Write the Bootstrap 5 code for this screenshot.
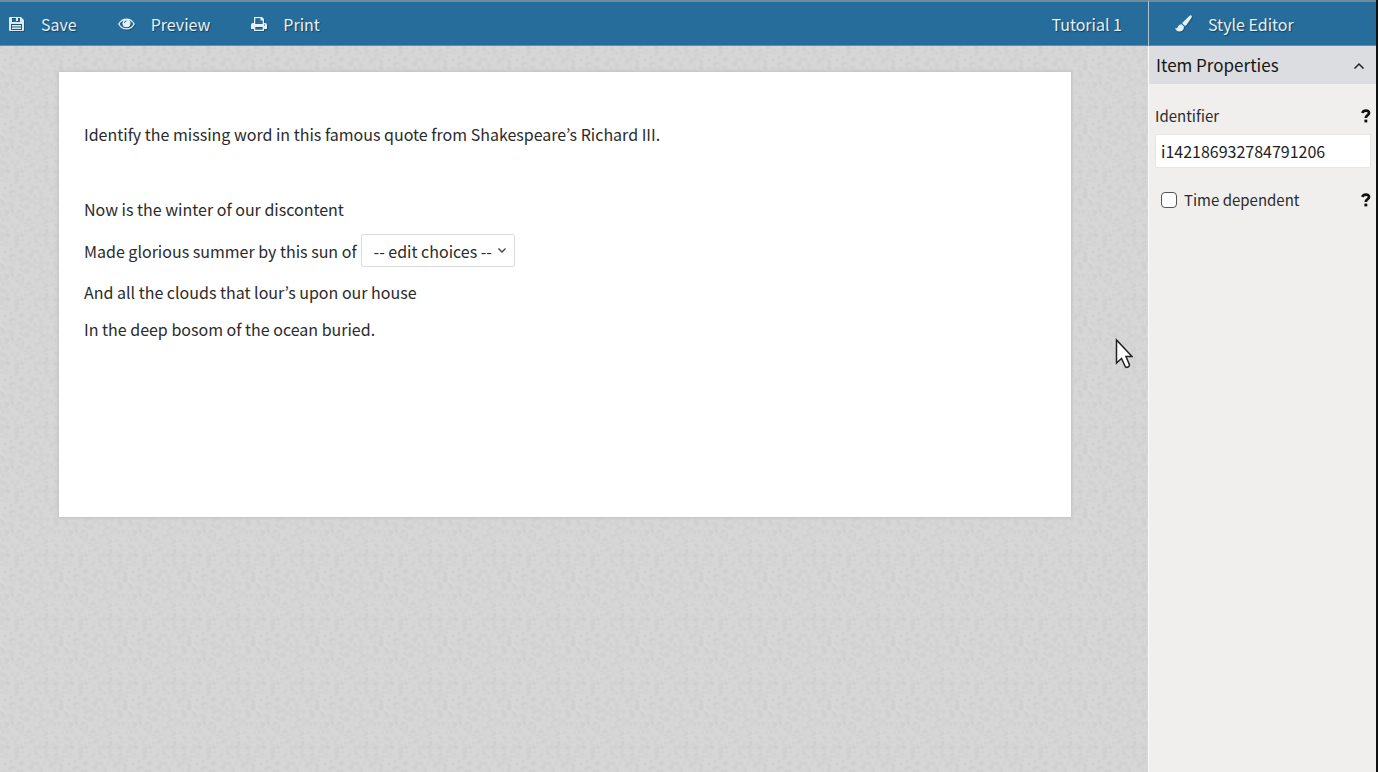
<!DOCTYPE html>
<html lang="en">
<head>
<meta charset="utf-8">
<meta name="viewport" content="width=device-width, initial-scale=1">
<title>Tutorial 1 - Item authoring</title>
<link href="https://cdn.jsdelivr.net/npm/bootstrap@5.3.0/dist/css/bootstrap.min.css" rel="stylesheet">
<style>
  body { font-family: "Noto Sans CJK KR", sans-serif; font-size: 16px; line-height: 24px; color: #2b2b2b; }
  .toolbar { height: 46px; background: #266d9c; border-top: 2px solid #6f8c9e; border-bottom: 1px solid #5d8fb3; }
  .tool { color: #e6f0f7; font-size: 16px; line-height: 24px; background: none; border: 0; padding: 0; text-decoration: none; text-shadow: 1px 1px 1px #123f60; display: inline-flex; align-items: center; gap: 16px; }
  .tool svg { filter: drop-shadow(1px 1px 0 #1b5379); }
  .tools { gap: 41px; padding-left: 8px; }
  .doc-title { padding-right: 26px; }
  .workspace {
    background-color: #d7d7d7;
    background-image: url("data:image/svg+xml,%3Csvg xmlns='http://www.w3.org/2000/svg' width='64' height='64'%3E%3Cfilter id='n' x='0' y='0' width='100%25' height='100%25'%3E%3CfeTurbulence type='fractalNoise' baseFrequency='.2 .25' numOctaves='3' seed='4' stitchTiles='stitch'/%3E%3CfeColorMatrix values='0 0 0 0 .45 0 0 0 0 .45 0 0 0 0 .45 .65 0 0 0 -.27'/%3E%3C/filter%3E%3Crect width='64' height='64' filter='url(%23n)'/%3E%3C/svg%3E");
    padding: 26px 77px 0 59px;
  }
  .sheet { background: #fff; min-height: 445px; padding: 50px 25px; box-shadow: 0 0 3px 1px #c2c2c2; }
  .sheet p { margin: 0 0 13px; }
  .sheet p.question { margin-bottom: 51px; }
  .choices { width: 154px; height: 33px; border: 1px solid #ddd; border-radius: 2px; padding: 0 0 0 12px; font: inherit; color: inherit; appearance: none;
    background: #fff url("data:image/svg+xml,%3Csvg xmlns='http://www.w3.org/2000/svg' width='10' height='7'%3E%3Cpath d='M1.5 1.5 5 5l3.500-3.500' fill='none' stroke='%23444' stroke-width='1.400'/%3E%3C/svg%3E") no-repeat right 7px center; }
  .props { width: 230px; background: #f0efee; border-left: 1px solid #fafafa; border-right: 2px solid #111; }
  .props .toolbar { padding-left: 26px; border-left: 1px solid #a9c6d9; margin-left: -1px; }
  .section-head { height: 38px; background: #dcdde1; border: 0; padding: 0 11px 0 7px; color: #161616; font-size: 17px; }
  .panel-body { padding: 20px 5px 0 6px; font-size: 15px; }
  .field-head { margin-bottom: 6px; }
  .ident { height: 34px; border: 1px solid #e6e6e6; border-radius: 2px; padding: 0 5px; font-size: 16px; line-height: 24px; color: #222; background: #fff; }
  .tick { appearance: none; width: 16px; height: 16px; margin: 0 7px 0 6px; border: 1px solid #555; border-radius: 4px; background: #fff; }
  .tick:checked { background: #266d9c; }
  .help { border: 0; background: none; padding: 0; width: 10px; line-height: 0; }
  .pointer { position: absolute; left: 1115px; top: 338px; pointer-events: none; }
</style>
</head>
<body>
<div class="d-flex min-vh-100 position-relative">
  <div class="d-flex flex-column flex-grow-1">
    <header class="toolbar d-flex align-items-center justify-content-between">
      <nav class="tools d-flex">
        <button class="tool" type="button">
          <svg width="17" height="16" viewBox="0 0 17 16"><path fill="#dcebf5" fill-rule="evenodd" d="M2 1h11l3 3v10a1 1 0 0 1-1 1H2a1 1 0 0 1-1-1V2a1 1 0 0 1 1-1zm2 1v4h8V2h-2v3H8V2zM3 8v6h11V8zm1 1h9v1.500H4zm0 2.500h9V13H4z"/></svg>
          <span>Save</span>
        </button>
        <button class="tool" type="button">
          <svg width="17" height="12" viewBox="0 0 17 12"><path d="M.8 6C4.600-.6 12.400-.6 16.200 6 12.400 12.600 4.600 12.600.8 6z" fill="none" stroke="#e6f0f7" stroke-width="1.300"/><circle cx="8.500" cy="5.300" r="4" fill="#e6f0f7"/><path d="M6.500 5a2 2 0 0 1 2-2" fill="none" stroke="#266d9c"/></svg>
          <span>Preview</span>
        </button>
        <button class="tool" type="button">
          <svg width="16" height="16" viewBox="0 0 16 16"><path fill="#e6f0f7" fill-rule="evenodd" d="M3 1h8l2 2v4h1a2 2 0 0 1 2 2v4h-3v2H3v-2H0V9a2 2 0 0 1 2-2h1zm1.300 1.300V8h7.400V4.500H9.500V2.300zm0 8.700v2.700h7.400V11zM13 8.500v1h1v-1z"/></svg>
          <span>Print</span>
        </button>
      </nav>
      <span class="tool doc-title">Tutorial 1</span>
    </header>

    <main class="workspace flex-grow-1">
      <div class="sheet">
        <p class="question">Identify the missing word in this famous quote from Shakespeare’s Richard III.</p>
        <p>Now is the winter of our discontent</p>
        <p class="d-flex align-items-center">
          <label class="me-1" for="gap">Made glorious summer by this sun of</label>
          <select class="choices" id="gap"><option>-- edit choices --</option></select>
        </p>
        <p>And all the clouds that lour’s upon our house</p>
        <p>In the deep bosom of the ocean buried.</p>
      </div>
    </main>
  </div>

  <aside class="props flex-shrink-0">
    <div class="toolbar d-flex align-items-center">
      <button class="tool" type="button">
        <svg width="17" height="17" viewBox="0 0 17 17"><path fill="#e6f0f7" d="M16.500.7c.6.600.4 1.300 0 2l-5 7.200c-.5.700-1.300 1-1.900.9L7.300 8.600c0-.6.300-1.200.8-1.700L14.300 1c.8-.7 1.600-.9 2.200-.3zM6.500 9.200l2.400 2.400c.3 3-1.800 4.900-4.700 4.900-2 0-3.600-1-4-3.700.9.600 1.700.8 2.300-.4.700-1.800 2-3.200 4-3.200z"/></svg>
        <span>Style Editor</span>
      </button>
    </div>
    <button class="section-head d-flex w-100 align-items-center justify-content-between" type="button" aria-expanded="true">
      <span>Item Properties</span>
      <svg width="12" height="8" viewBox="0 0 12 8"><path d="M1.500 7.500 6 3l4.500 4.500" fill="none" stroke="#222" stroke-width="1.500"/></svg>
    </button>
    <form class="panel-body">
      <div class="field-head d-flex align-items-center justify-content-between">
        <label for="identifier">Identifier</label>
        <button class="help" type="button" aria-label="Help on identifier"><svg width="10" height="14" viewBox="0 0 10 14"><path d="M1.500 4C2 1 8 .500 8 4c0 2.300-3.200 2.300-3.200 5" fill="none" stroke="#111" stroke-width="2.700"/><path d="M3.400 10.600h2.900v2.800H3.400z" fill="#111"/></svg></button>
      </div>
      <input class="ident w-100 d-block" id="identifier" type="text" value="i142186932784791206">
      <div class="d-flex align-items-center justify-content-between mt-3 pt-1">
        <div class="d-flex align-items-center">
          <input class="tick" id="timed" type="checkbox"><label for="timed">Time dependent</label>
        </div>
        <button class="help" type="button" aria-label="Help on time dependent"><svg width="10" height="14" viewBox="0 0 10 14"><path d="M1.500 4C2 1 8 .500 8 4c0 2.300-3.200 2.300-3.200 5" fill="none" stroke="#111" stroke-width="2.700"/><path d="M3.400 10.600h2.900v2.800H3.400z" fill="#111"/></svg></button>
      </div>
    </form>
  </aside>

  <svg class="pointer" width="18" height="31" viewBox="0 0 18 31"><path d="M1.500 2v23l5-4.500 4 8.500c1.500 1 4-.3 4-2L11 18.500h6z" fill="#fff" stroke="#222" stroke-width="1.500"/></svg>
</div>
<script src="https://cdn.jsdelivr.net/npm/bootstrap@5.3.0/dist/js/bootstrap.bundle.min.js"></script>
</body>
</html>
